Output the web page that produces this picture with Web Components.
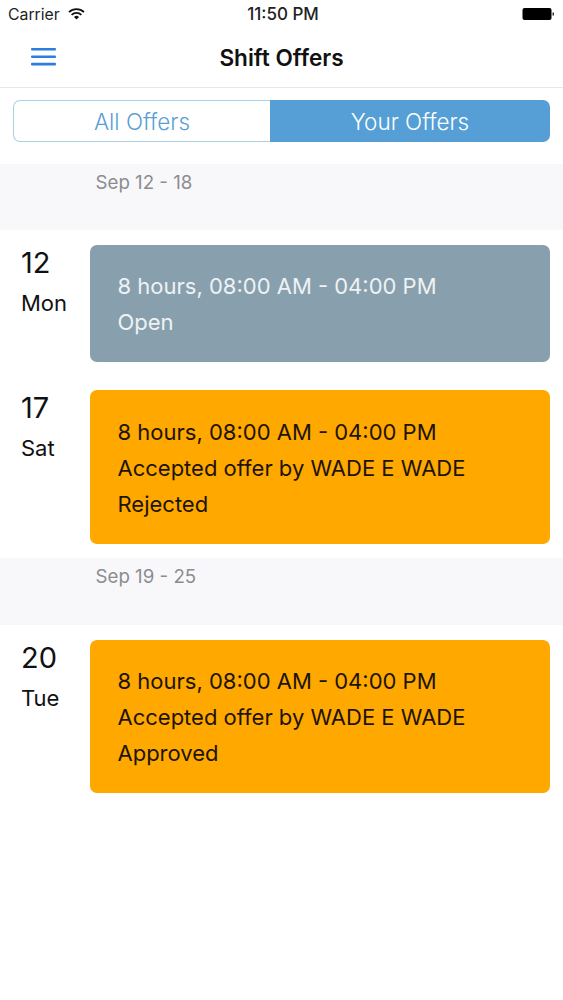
<!DOCTYPE html>
<html>
<head>
<meta charset="utf-8">
<title>Shift Offers</title>
<style>
html, body { margin: 0; padding: 0; background: #fff; }
body { font-family: Inter, "Noto Sans", sans-serif; }
</style>
</head>
<body>
<status-bar></status-bar>
<nav-bar>Shift Offers</nav-bar>
<segment-control></segment-control>

<week-header>Sep 12 - 18</week-header>
<shift-row day="12" weekday="Mon" kind="open" first>
  <div>8 hours, 08:00 AM - 04:00 PM</div>
  <div>Open</div>
</shift-row>
<shift-row day="17" weekday="Sat">
  <div>8 hours, 08:00 AM - 04:00 PM</div>
  <div>Accepted offer by WADE E WADE</div>
  <div>Rejected</div>
</shift-row>

<week-header style="height: 66.5px">Sep 19 - 25</week-header>
<shift-row day="20" weekday="Tue" first>
  <div>8 hours, 08:00 AM - 04:00 PM</div>
  <div>Accepted offer by WADE E WADE</div>
  <div>Approved</div>
</shift-row>

<script>
customElements.define('status-bar', class extends HTMLElement {
  constructor() {
    super();
    this.attachShadow({ mode: 'open' }).innerHTML = `
      <style>
        :host { display: grid; grid-template-columns: 1fr auto 1fr; align-items: center; height: 28px; padding: 0 8px; color: #222; font-size: 15.8px; }
        .left { display: flex; align-items: center; gap: 8px; }
        .time { font-weight: 500; font-size: 17px; padding-left: 3px; }
        .right { display: flex; justify-content: flex-end; }
        svg { display: block; }
      </style>
      <div class="left">
        <span>Carrier</span>
        <svg width="17" height="12" viewBox="0 0 17 12">
          <path d="M1 4.2a10.8 10.8 0 0 1 15 0" fill="none" stroke="#111" stroke-width="1.7"/>
          <path d="M3.6 6.8a7 7 0 0 1 9.8 0" fill="none" stroke="#111" stroke-width="1.7"/>
          <path d="M6 9.1a3.5 3.5 0 0 1 5 0L8.5 11.6z" fill="#111"/>
        </svg>
      </div>
      <div class="time">11:50 PM</div>
      <div class="right">
        <svg width="33" height="14" viewBox="0 0 33 14">
          <rect x="0.5" y="1" width="29" height="12" rx="2" fill="#000"/>
          <rect x="30.5" y="5.5" width="1.5" height="3" fill="#333"/>
        </svg>
      </div>`;
  }
});

customElements.define('nav-bar', class extends HTMLElement {
  constructor() {
    super();
    this.attachShadow({ mode: 'open' }).innerHTML = `
      <style>
        :host { display: grid; grid-template-columns: 1fr auto 1fr; align-items: center; height: 58.5px; border-bottom: 1px solid #e8e8ea; color: #111; font-size: 22.6px; font-weight: 600; }
        .menu { padding-left: 31px; display: flex; }
        svg { display: block; }
      </style>
      <div class="menu">
        <svg width="25" height="18" viewBox="0 0 25 18">
          <rect y="0" width="25" height="2.6" rx="1" fill="#2a7fdc"/>
          <rect y="7.4" width="25" height="2.6" rx="1" fill="#2a7fdc"/>
          <rect y="14.8" width="25" height="2.6" rx="1" fill="#2a7fdc"/>
        </svg>
      </div>
      <div><slot></slot></div>
      <div></div>`;
  }
});

customElements.define('segment-control', class extends HTMLElement {
  constructor() {
    super();
    this.attachShadow({ mode: 'open' }).innerHTML = `
      <style>
        :host { display: block; padding: 12.5px 13px 22px 13px; }
        .wrap { display: grid; grid-template-columns: 257px 1fr; height: 42px; box-sizing: border-box; font-size: 22.5px; font-weight: 300; }
        .item { display: flex; align-items: center; justify-content: center; box-sizing: border-box; }
        .off { border: 1px solid #a9d0e8; border-right: 0; border-radius: 7px 0 0 7px; color: #5a9fd4; }
        .on { background: #559fd6; border-radius: 0 7px 7px 0; color: #fff; }
      </style>
      <div class="wrap">
        <div class="item off">All Offers</div>
        <div class="item on">Your Offers</div>
      </div>`;
  }
});

customElements.define('week-header', class extends HTMLElement {
  constructor() {
    super();
    this.attachShadow({ mode: 'open' }).innerHTML = `
      <style>
        :host { display: block; box-sizing: border-box; height: 66px; padding: 7px 0 0 95.5px; background: #f8f8fa; color: #8c8c90; font-size: 18.7px; line-height: 24px; }
      </style>
      <slot></slot>`;
  }
});

customElements.define('shift-row', class extends HTMLElement {
  constructor() {
    super();
    const open = this.getAttribute('kind') === 'open';
    this.attachShadow({ mode: 'open' }).innerHTML = `
      <style>
        :host { display: grid; grid-template-columns: 69px 460px; padding: 28px 13px 14px 21px; }
        :host([first]) { padding-top: 15px; padding-bottom: 0; }
        .date { color: #111; }
        .day { font-size: 29px; line-height: 36px; }
        .weekday { font-size: 22px; line-height: 28px; margin-top: 8px; }
        .card { box-sizing: border-box; padding: ${this.hasAttribute('first') ? '23px 27.5px 22px' : '24px 27.5px 22px'}; border-radius: 7px; font-size: 22px; line-height: 36px; background: ${open ? '#88a0ad' : '#ffa800'}; color: ${open ? '#eef2f4' : '#1d1405'}; }
      </style>
      <div class="date">
        <div class="day">${this.getAttribute('day')}</div>
        <div class="weekday">${this.getAttribute('weekday')}</div>
      </div>
      <div class="card"><slot></slot></div>`;
  }
});
</script>
</body>
</html>
